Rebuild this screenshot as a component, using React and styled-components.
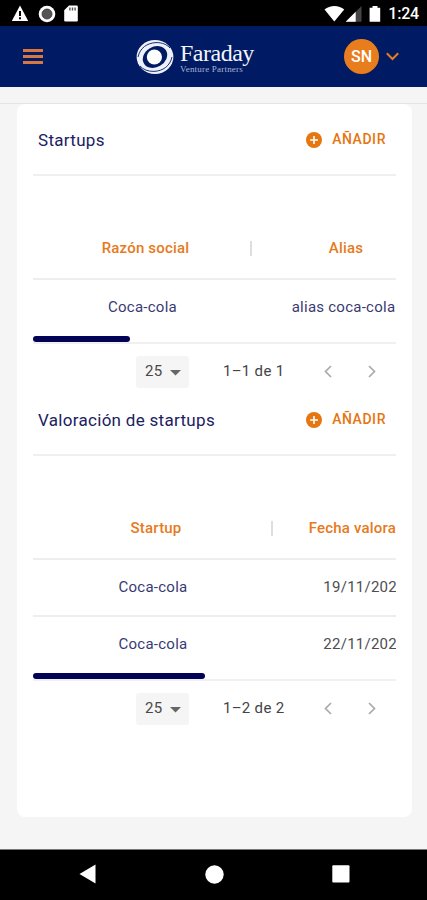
import styled, { createGlobalStyle } from "styled-components";

const sections = [
  {
    title: "Startups",
    firstColumn: 219,
    headers: ["Razón social", "Alias"],
    rows: [["Coca-cola", "alias coca-cola"]],
    thumb: 97,
    range: "1–1 de 1",
  },
  {
    title: "Valoración de startups",
    firstColumn: 240,
    headers: ["Startup", "Fecha valoración"],
    rows: [
      ["Coca-cola", "19/11/2020"],
      ["Coca-cola", "22/11/2020"],
    ],
    dates: true,
    thumb: 172,
    range: "1–2 de 2",
  },
];

const StatusBar = () => (
  <StatusContainer>
    <StatusGroup>
      <svg width="18" height="17" viewBox="0 0 18 17">
        <path d="M9 0.5L17.2 16H0.8Z" fill="#fff" />
        <path d="M8 6h2v5H8zM8 12.2h2v2H8z" fill="#000" />
      </svg>
      <svg width="18" height="18" viewBox="0 0 18 18">
        <circle cx="9" cy="9" r="8.3" fill="#fff" />
        <circle cx="9" cy="9" r="5" fill="#555" stroke="#333" strokeWidth="0.8" />
      </svg>
      <svg width="14" height="17" viewBox="0 0 14 17">
        <path d="M5 0.5h7.5a1.3 1.3 0 0 1 1.3 1.3v13.4a1.3 1.3 0 0 1-1.3 1.3h-11a1.3 1.3 0 0 1-1.3-1.3V5.3z" fill="#fff" />
        <path d="M5.2 2.5h1.4v3H5.2zM7.8 2.5h1.4v3H7.8zM10.4 2.5h1.4v3h-1.4z" fill="#555" />
      </svg>
    </StatusGroup>
    <StatusIcons>
      <svg width="64" height="18" viewBox="0 0 64 18">
        <path d="M0.5 4.6C6-0.1 15-0.1 20.2 4.6L10.3 16.6Z" fill="#fff" />
        <path d="M37.5 1v15.8H21.7z" fill="#444" />
        <path d="M31.7 6.8v10H21.7z" fill="#fff" />
        <path d="M48.5 1h5v1.7h2.7v14.1H45.6V2.7h2.9z" fill="#fff" />
      </svg>
      <Clock>1:24</Clock>
    </StatusIcons>
  </StatusContainer>
);

const Logo = () => (
  <LogoContainer>
    <svg width="40" height="36" viewBox="0 0 40 36">
      <ellipse cx="20" cy="18" rx="18.4" ry="17" fill="#eef1f9" />
      <ellipse cx="20" cy="18" rx="12.8" ry="10.2" fill="#001a63" transform="rotate(-30 20 18)" />
      <path d="M3 18C5 9 12 4 21 3.6C27 3.4 32 5.6 35 9" fill="none" stroke="#001a63" strokeWidth="0.9" />
      <path d="M37 18C35 27 28 32 19 32.4C13 32.6 8 30.4 5 27" fill="none" stroke="#001a63" strokeWidth="0.9" />
      <circle cx="19.4" cy="18" r="7.6" fill="#fff" />
    </svg>
    <LogoWords>
      <LogoName>Faraday</LogoName>
      <LogoTagline>Venture Partners</LogoTagline>
    </LogoWords>
  </LogoContainer>
);

const Header = () => (
  <HeaderContainer>
    <MenuIcon>
      <MenuLine />
      <MenuLine />
      <MenuLine />
    </MenuIcon>
    <Logo />
    <UserMenu>
      <Avatar>SN</Avatar>
      <svg width="13" height="9" viewBox="0 0 13 9">
        <path d="M0.8 1.2L6.5 7L12.2 1.2" fill="none" stroke="#e87d1e" strokeWidth="2" />
      </svg>
    </UserMenu>
  </HeaderContainer>
);

const AddButton = () => (
  <AddButtonContainer>
    <svg width="16" height="16" viewBox="0 0 16 16">
      <circle cx="8" cy="8" r="8" fill="#e67610" />
      <path d="M8 4v8M4 8h8" stroke="#fff" strokeWidth="1.6" />
    </svg>
    <AddLabel>AÑADIR</AddLabel>
  </AddButtonContainer>
);

const Pagination = ({ range }) => (
  <PaginationContainer>
    <PageSize>
      25
      <svg width="11" height="6" viewBox="0 0 11 6">
        <path d="M0 0h11L5.5 5.6z" fill="#666" />
      </svg>
    </PageSize>
    <Range>{range}</Range>
    <Arrows>
      <svg width="8" height="13" viewBox="0 0 8 13">
        <path d="M7 1L1.5 6.5L7 12" fill="none" stroke="#aaa" strokeWidth="1.7" />
      </svg>
      <svg width="8" height="13" viewBox="0 0 8 13">
        <path d="M1 1L6.5 6.5L1 12" fill="none" stroke="#aaa" strokeWidth="1.7" />
      </svg>
    </Arrows>
  </PaginationContainer>
);

const Section = ({ section }) => (
  <SectionContainer>
    <SectionHead>
      <SectionTitle>{section.title}</SectionTitle>
      <AddButton />
    </SectionHead>
    <Table>
      <HeadRow>
        <HeadCell $width={section.firstColumn}>{section.headers[0]}</HeadCell>
        <Separator />
        <HeadCell $width={182}>{section.headers[1]}</HeadCell>
      </HeadRow>
      {section.rows.map((row, index) => (
        <Row key={index}>
          <Cell $width={section.firstColumn}>{row[0]}</Cell>
          <Cell $width={183} $dark={section.dates}>
            {row[1]}
          </Cell>
        </Row>
      ))}
      <ScrollTrack>
        <ScrollThumb $width={section.thumb} />
      </ScrollTrack>
    </Table>
    <Pagination range={section.range} />
  </SectionContainer>
);

const App = () => {
  return (
    <Screen>
      <GlobalStyle />
      <StatusBar />
      <Header />
      <Strip />
      <Main>
        <Card>
          {sections.map((section) => (
            <Section key={section.title} section={section} />
          ))}
        </Card>
      </Main>
      <NavigationBar>
        <svg width="17" height="20" viewBox="0 0 17 20">
          <path d="M0.5 10L16.5 0.5V19.5Z" fill="#fff" />
        </svg>
        <svg width="19" height="19" viewBox="0 0 19 19">
          <circle cx="9.5" cy="9.5" r="9.2" fill="#fff" />
        </svg>
        <svg width="18" height="18" viewBox="0 0 18 18">
          <rect x="0.3" y="0.3" width="17.2" height="17.2" rx="1" fill="#fff" />
        </svg>
      </NavigationBar>
    </Screen>
  );
};

const GlobalStyle = createGlobalStyle`
  * {
    box-sizing: border-box;
  }

  body {
    margin: 0;
    font-family: Roboto, "Liberation Sans", sans-serif;
  }

  svg {
    display: block;
    flex: none;
  }
`;

const Screen = styled.div`
  display: flex;
  flex-direction: column;
  width: 427px;
  height: 900px;
  overflow: hidden;
  background: #f5f5f5;
`;

const StatusContainer = styled.div`
  display: flex;
  justify-content: space-between;
  align-items: center;
  height: 26px;
  padding: 1px 8px 0 11px;
  background: #000;
`;

const StatusGroup = styled.div`
  display: flex;
  align-items: center;
  gap: 8.5px;
`;

const StatusIcons = styled.div`
  display: flex;
  align-items: center;
`;

const Clock = styled.span`
  font-size: 16px;
  font-weight: 500;
  line-height: 18px;
  letter-spacing: -0.2px;
  color: #fff;
`;

const HeaderContainer = styled.header`
  display: flex;
  align-items: center;
  height: 61px;
  padding: 0 28px 0 23px;
  background: #001a63;
`;

const MenuIcon = styled.div`
  display: flex;
  flex-direction: column;
  gap: 3px;
  width: 20px;
`;

const MenuLine = styled.span`
  height: 3px;
  background: #d8773f;
`;

const LogoContainer = styled.div`
  display: flex;
  align-items: center;
  margin-left: 92px;
`;

const LogoWords = styled.div`
  display: flex;
  flex-direction: column;
  margin-left: 5px;
  font-family: "Liberation Serif", serif;
  white-space: nowrap;
`;

const LogoName = styled.span`
  font-size: 24px;
  line-height: 24px;
  letter-spacing: -0.5px;
  color: #f1f4fb;
`;

const LogoTagline = styled.span`
  font-size: 9px;
  line-height: 8px;
  letter-spacing: 0.2px;
  color: #a9b4d6;
`;

const UserMenu = styled.div`
  display: flex;
  align-items: center;
  gap: 7px;
  margin-left: auto;
`;

const Avatar = styled.div`
  width: 35px;
  height: 35px;
  border-radius: 50%;
  background: #e87d1e;
  color: #fff;
  font-size: 16px;
  font-weight: 500;
  line-height: 36px;
  text-align: center;
`;

const Strip = styled.div`
  height: 17px;
  border-bottom: 1px solid #e4e4e6;
  background: #f5f5f5;
`;

const Main = styled.main`
  flex: 1;
  padding: 0 15px 0 17px;
`;

const Card = styled.div`
  height: 713px;
  padding: 0 16px;
  border-radius: 8px;
  background: #fff;
`;

const SectionContainer = styled.section`
  display: flex;
  flex-direction: column;
  height: 280px;
`;

const SectionHead = styled.div`
  display: flex;
  justify-content: space-between;
  align-items: center;
  flex: none;
  height: 72px;
  padding: 0 10px 0 5px;
  border-bottom: 2px solid #efeff0;
`;

const SectionTitle = styled.h2`
  margin: 2px 0 0;
  font-size: 17px;
  font-weight: 400;
  line-height: 22px;
  letter-spacing: 0.3px;
  color: #20205f;
`;

const AddButtonContainer = styled.div`
  display: flex;
  align-items: center;
  gap: 10px;
  margin-top: 2px;
`;

const AddLabel = styled.span`
  margin-top: -3px;
  font-size: 14px;
  font-weight: 500;
  line-height: 16px;
  letter-spacing: 0.55px;
  color: #e67610;
`;

const Table = styled.div`
  flex: none;
  padding-top: 42px;
  overflow: hidden;
`;

const HeadRow = styled.div`
  display: flex;
  align-items: center;
  width: max-content;
  height: 60px;
`;

const HeadCell = styled.div`
  width: ${(props) => props.$width}px;
  flex: none;
  padding-left: 6px;
  font-size: 15px;
  font-weight: 500;
  letter-spacing: 0.2px;
  text-align: center;
  white-space: nowrap;
  color: #e67a20;

  &:first-child {
    margin-right: -2px;
  }
`;

const Separator = styled.span`
  width: 2px;
  height: 15px;
  background: #dedede;
`;

const Row = styled.div`
  display: flex;
  align-items: center;
  width: max-content;
  height: 57px;
  padding-bottom: 2px;
  border-top: 2px solid #eeeeef;
`;

const Cell = styled.div`
  width: ${(props) => props.$width}px;
  flex: none;
  font-size: 15px;
  letter-spacing: 0.25px;
  text-align: center;
  white-space: nowrap;
  color: ${(props) => (props.$dark ? "#4e4e50" : "#3a3a72")};
`;

const ScrollTrack = styled.div`
  height: 9px;
  border-bottom: 2px solid #f0f0f1;
`;

const ScrollThumb = styled.div`
  position: relative;
  top: 1px;
  width: ${(props) => props.$width}px;
  height: 6px;
  border-radius: 3px;
  background: #020257;
`;

const PaginationContainer = styled.div`
  display: flex;
  align-items: center;
  height: 32px;
  margin-top: 12px;
  padding: 0 20px 0 103px;
`;

const PageSize = styled.div`
  display: flex;
  align-items: center;
  justify-content: space-between;
  width: 53px;
  height: 32px;
  padding: 0 8px 3px 9px;
  border-radius: 3px;
  background: #f5f5f5;
  font-size: 15px;
  letter-spacing: 0.3px;
  color: #48484a;

  svg {
    margin-top: 5px;
  }
`;

const Range = styled.span`
  margin: -2px 0 0 34px;
  font-size: 15px;
  letter-spacing: 0.3px;
  white-space: nowrap;
  color: #444446;
`;

const Arrows = styled.div`
  display: flex;
  gap: 36px;
  margin: -1px 0 0 auto;
`;

const NavigationBar = styled.nav`
  display: flex;
  justify-content: space-between;
  align-items: center;
  height: 51px;
  padding: 0 77px 2px 79px;
  border-top: 1px solid #777;
  background: #000;
`;

export default App;
